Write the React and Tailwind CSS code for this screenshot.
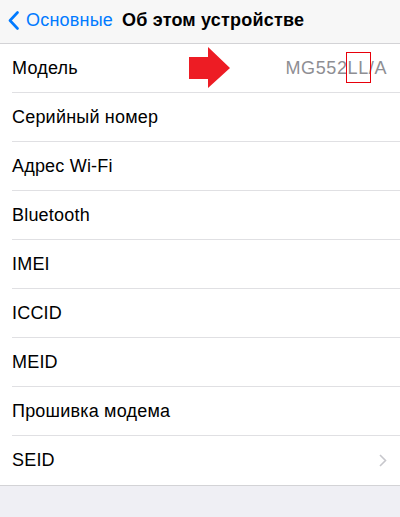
// App.jsx — iOS "About" settings screen with annotation arrow

const rows = [
  { label: "Модель", value: "MG552LL/A" },
  { label: "Серийный номер" },
  { label: "Адрес Wi-Fi" },
  { label: "Bluetooth" },
  { label: "IMEI" },
  { label: "ICCID" },
  { label: "MEID" },
  { label: "Прошивка модема" },
  { label: "SEID", chevron: true },
];

const font = { fontFamily: '"Liberation Sans", Arial, sans-serif' };

const App = () => {
  return (
    <div className="w-[400px] h-[517px] bg-[#efeff4] overflow-hidden" style={font}>
      {/* Nav bar */}
      <div className="h-[44px] bg-[#f7f7f7] border-b border-[#d3d3d6] flex items-center pl-[8px] pb-[2px]">
        <svg width="11" height="19" viewBox="0 0 11 19" className="flex-shrink-0">
          <path d="M9.5 1.5 L2 9.5 L9.5 17.5" fill="none" stroke="#007aff" strokeWidth="2.6" strokeLinecap="round" strokeLinejoin="round" />
        </svg>
        <span className="text-[#007aff] text-[18px] tracking-[0.2px] ml-[7px]">Основные</span>
        <span className="text-black text-[18px] font-bold tracking-[0.2px] ml-[9px]">Об этом устройстве</span>
      </div>

      {/* List */}
      <div className="bg-white border-b border-[#d3d3d6]">
        {rows.map((row, i) => (
          <div key={row.label} className="relative h-[49px] pl-[12px]">
            <div className={`h-full flex items-center pr-[13px] ${i < rows.length - 1 ? "border-b border-[#e0e0e3]" : ""}`}>
              <span className="flex-1 text-[18px] tracking-[0.2px] text-black">{row.label}</span>
              {row.value && (
                <span className="text-[18px] leading-[28px] tracking-[0.6px] text-[#8e8e93]">
                  MG552
                  <span className="inline-block relative leading-[28px]">
                    LL
                    <span className="absolute left-[-1px] right-[-1px] top-[-1px] bottom-[0px] ring-1 ring-red-600" />
                  </span>
                  /A
                </span>
              )}
              {row.chevron && (
                <svg width="8" height="13" viewBox="0 0 8 13">
                  <path d="M1 1 L6.5 6.5 L1 12" fill="none" stroke="#c7c7cc" strokeWidth="1.6" />
                </svg>
              )}
            </div>
            {row.value && (
              <svg width="42" height="42" viewBox="0 0 42 42" className="absolute left-[189px] top-[3px]">
                <polygon points="0,10 19,10 19,0 41,21 19,41 19,32 0,32" fill="#ed1c24" />
              </svg>
            )}
          </div>
        ))}
      </div>
    </div>
  );
};

export default App;
